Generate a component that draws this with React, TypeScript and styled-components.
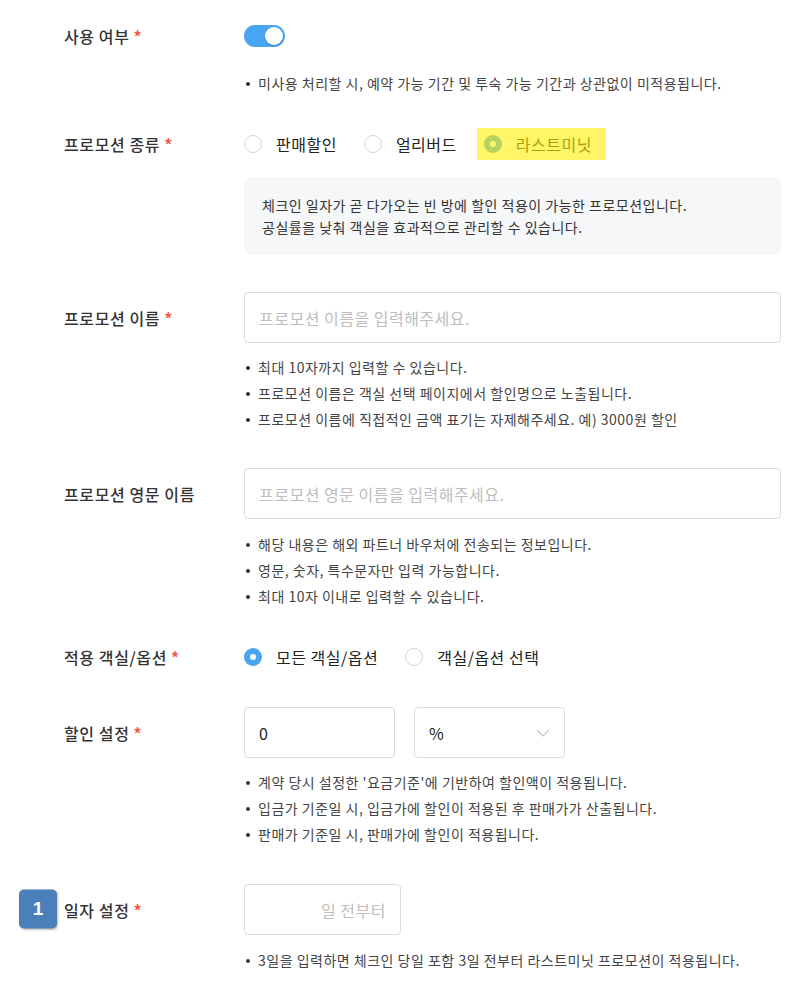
import React from "react";
import styled, { createGlobalStyle } from "styled-components";

const Global = createGlobalStyle`
  html, body { margin: 0; padding: 0; background: #fff; }
  body { font-family: "Noto Sans CJK KR", "Noto Sans", sans-serif; color: #333; }
  * { box-sizing: border-box; }
`;

const Page = styled.div`
  padding: 25px 27px 30px 64px;
  display: flex;
  flex-direction: column;
`;

const Field = styled.div<{ $mt?: number }>`
  display: grid;
  grid-template-columns: 180px 1fr;
  margin-top: ${(p) => p.$mt ?? 0}px;
`;

const Label = styled.div<{ $h: number }>`
  position: relative;
  height: ${(p) => p.$h}px;
  display: flex;
  align-items: center;
  font-size: 16px;
  font-weight: 500;
  color: #333;
  letter-spacing: 0.6px;
`;

const Star = styled.span`
  color: #f25a45;
  margin-left: 4px;
  font-weight: 700;
`;

const Badge = styled.div`
  position: absolute;
  left: -45px;
  top: 50%;
  transform: translateY(-50%);
  margin-top: -1px;
  width: 38px;
  height: 39px;
  border-radius: 5px;
  background: #4b7fb9;
  box-shadow: 1px 1px 2px rgba(0, 0, 0, 0.25);
  color: #fff;
  font-family: "Liberation Sans", Arial, sans-serif;
  font-weight: 700;
  font-size: 19px;
  letter-spacing: 0;
  display: flex;
  align-items: center;
  justify-content: center;
`;

const Content = styled.div`
  display: flex;
  flex-direction: column;
  min-width: 0;
`;

const Toggle = styled.div`
  width: 41px;
  height: 22px;
  border-radius: 11px;
  background: #4aa5f0;
  position: relative;
  &::after {
    content: "";
    position: absolute;
    right: 2px;
    top: 2px;
    width: 18px;
    height: 18px;
    border-radius: 50%;
    background: #fff;
    box-shadow: 0 1px 2px rgba(0, 0, 0, 0.2);
  }
`;

const Notes = styled.ul<{ $mt: number }>`
  list-style: none;
  margin: ${(p) => p.$mt}px 0 0;
  padding: 0;
`;

const Note = styled.li`
  position: relative;
  padding-left: 14px;
  font-size: 14px;
  line-height: 26px;
  color: #444;
  letter-spacing: 0.5px;
  white-space: nowrap;
  &::before {
    content: "";
    position: absolute;
    left: 2px;
    top: 12px;
    width: 4px;
    height: 4px;
    border-radius: 50%;
    background: #333;
  }
`;

const RadioGroup = styled.div`
  display: flex;
  align-items: center;
  height: 32px;
  gap: 27px;
`;

const RadioItem = styled.label<{ $highlight?: boolean }>`
  position: relative;
  display: flex;
  align-items: center;
  gap: 14px;
  height: 32px;
  font-size: 16px;
  color: #222;
  letter-spacing: 0.5px;
  ${(p) =>
    p.$highlight
      ? `
    margin-left: -7px;
    padding: 0 14px 0 7px;
    &::after {
      content: "";
      position: absolute;
      inset: 0;
      background: rgba(255, 238, 0, 0.6);
    }
  `
      : ""}
`;

const RadioCircle = styled.span<{ $checked?: boolean }>`
  width: 18px;
  height: 18px;
  border-radius: 50%;
  flex: none;
  ${(p) =>
    p.$checked
      ? `background: #4aa5f0; position: relative;
         &::after { content: ""; position: absolute; left: 6px; top: 6px; width: 6px; height: 6px; border-radius: 50%; background: #fff; }`
      : `border: 1px solid #d6d6d6; background: #fff;`}
`;

const InfoBox = styled.div`
  margin-top: 17px;
  background: #f6f7f9;
  border-radius: 8px;
  padding: 17px 18px;
  font-size: 14px;
  line-height: 22px;
  color: #333;
  letter-spacing: 0.5px;
`;

const TextInput = styled.input<{ $w?: number; $align?: string }>`
  width: ${(p) => (p.$w ? `${p.$w}px` : "100%")};
  height: 51px;
  border: 1px solid #dcdcdc;
  border-radius: 4px;
  padding: 0 14px;
  font-family: inherit;
  font-size: 16px;
  letter-spacing: 0.5px;
  color: #222;
  text-align: ${(p) => p.$align ?? "left"};
  outline: none;
  &::placeholder { color: #bdbdbd; }
`;

const InputRow = styled.div`
  display: flex;
  gap: 19px;
`;

const Select = styled.div`
  width: 151px;
  height: 51px;
  border: 1px solid #dcdcdc;
  border-radius: 4px;
  padding: 0 14px;
  display: flex;
  align-items: center;
  justify-content: space-between;
  font-size: 16px;
  color: #222;
`;

const Chevron = () => (
  <svg width="14" height="8" viewBox="0 0 14 8" fill="none">
    <path d="M1 1l6 6 6-6" stroke="#c4c4c4" strokeWidth="1.2" />
  </svg>
);

export default function App() {
  return (
    <>
      <Global />
      <Page>
        <Field>
          <Label $h={22}>
            사용 여부<Star>*</Star>
          </Label>
          <Content>
            <Toggle />
            <Notes $mt={23}>
              <Note>미사용 처리할 시, 예약 가능 기간 및 투숙 가능 기간과 상관없이 미적용됩니다.</Note>
            </Notes>
          </Content>
        </Field>

        <Field $mt={32}>
          <Label $h={32}>
            프로모션 종류<Star>*</Star>
          </Label>
          <Content>
            <RadioGroup>
              <RadioItem>
                <RadioCircle />
                판매할인
              </RadioItem>
              <RadioItem>
                <RadioCircle />
                얼리버드
              </RadioItem>
              <RadioItem $highlight>
                <RadioCircle $checked />
                라스트미닛
              </RadioItem>
            </RadioGroup>
            <InfoBox>
              체크인 일자가 곧 다가오는 빈 방에 할인 적용이 가능한 프로모션입니다.
              <br />
              공실률을 낮춰 객실을 효과적으로 관리할 수 있습니다.
            </InfoBox>
          </Content>
        </Field>

        <Field $mt={37}>
          <Label $h={51}>
            프로모션 이름<Star>*</Star>
          </Label>
          <Content>
            <TextInput placeholder="프로모션 이름을 입력해주세요." />
            <Notes $mt={11}>
              <Note>최대 10자까지 입력할 수 있습니다.</Note>
              <Note>프로모션 이름은 객실 선택 페이지에서 할인명으로 노출됩니다.</Note>
              <Note>프로모션 이름에 직접적인 금액 표기는 자제해주세요. 예) 3000원 할인</Note>
            </Notes>
          </Content>
        </Field>

        <Field $mt={36}>
          <Label $h={51}>프로모션 영문 이름</Label>
          <Content>
            <TextInput placeholder="프로모션 영문 이름을 입력해주세요." />
            <Notes $mt={12}>
              <Note>해당 내용은 해외 파트너 바우처에 전송되는 정보입니다.</Note>
              <Note>영문, 숫자, 특수문자만 입력 가능합니다.</Note>
              <Note>최대 10자 이내로 입력할 수 있습니다.</Note>
            </Notes>
          </Content>
        </Field>

        <Field $mt={32}>
          <Label $h={32}>
            적용 객실/옵션<Star>*</Star>
          </Label>
          <Content>
            <RadioGroup>
              <RadioItem>
                <RadioCircle $checked />
                모든 객실/옵션
              </RadioItem>
              <RadioItem>
                <RadioCircle />
                객실/옵션 선택
              </RadioItem>
            </RadioGroup>
          </Content>
        </Field>

        <Field $mt={34}>
          <Label $h={51}>
            할인 설정<Star>*</Star>
          </Label>
          <Content>
            <InputRow>
              <TextInput $w={151} defaultValue="0" />
              <Select>
                <span>%</span>
                <Chevron />
              </Select>
            </InputRow>
            <Notes $mt={11}>
              <Note>계약 당시 설정한 '요금기준'에 기반하여 할인액이 적용됩니다.</Note>
              <Note>입금가 기준일 시, 입금가에 할인이 적용된 후 판매가가 산출됩니다.</Note>
              <Note>판매가 기준일 시, 판매가에 할인이 적용됩니다.</Note>
            </Notes>
          </Content>
        </Field>

        <Field $mt={37}>
          <Label $h={51}>
            <Badge>1</Badge>
            일자 설정<Star>*</Star>
          </Label>
          <Content>
            <TextInput $w={157} $align="right" placeholder="일 전부터" />
            <Notes $mt={12}>
              <Note>3일을 입력하면 체크인 당일 포함 3일 전부터 라스트미닛 프로모션이 적용됩니다.</Note>
            </Notes>
          </Content>
        </Field>
      </Page>
    </>
  );
}
